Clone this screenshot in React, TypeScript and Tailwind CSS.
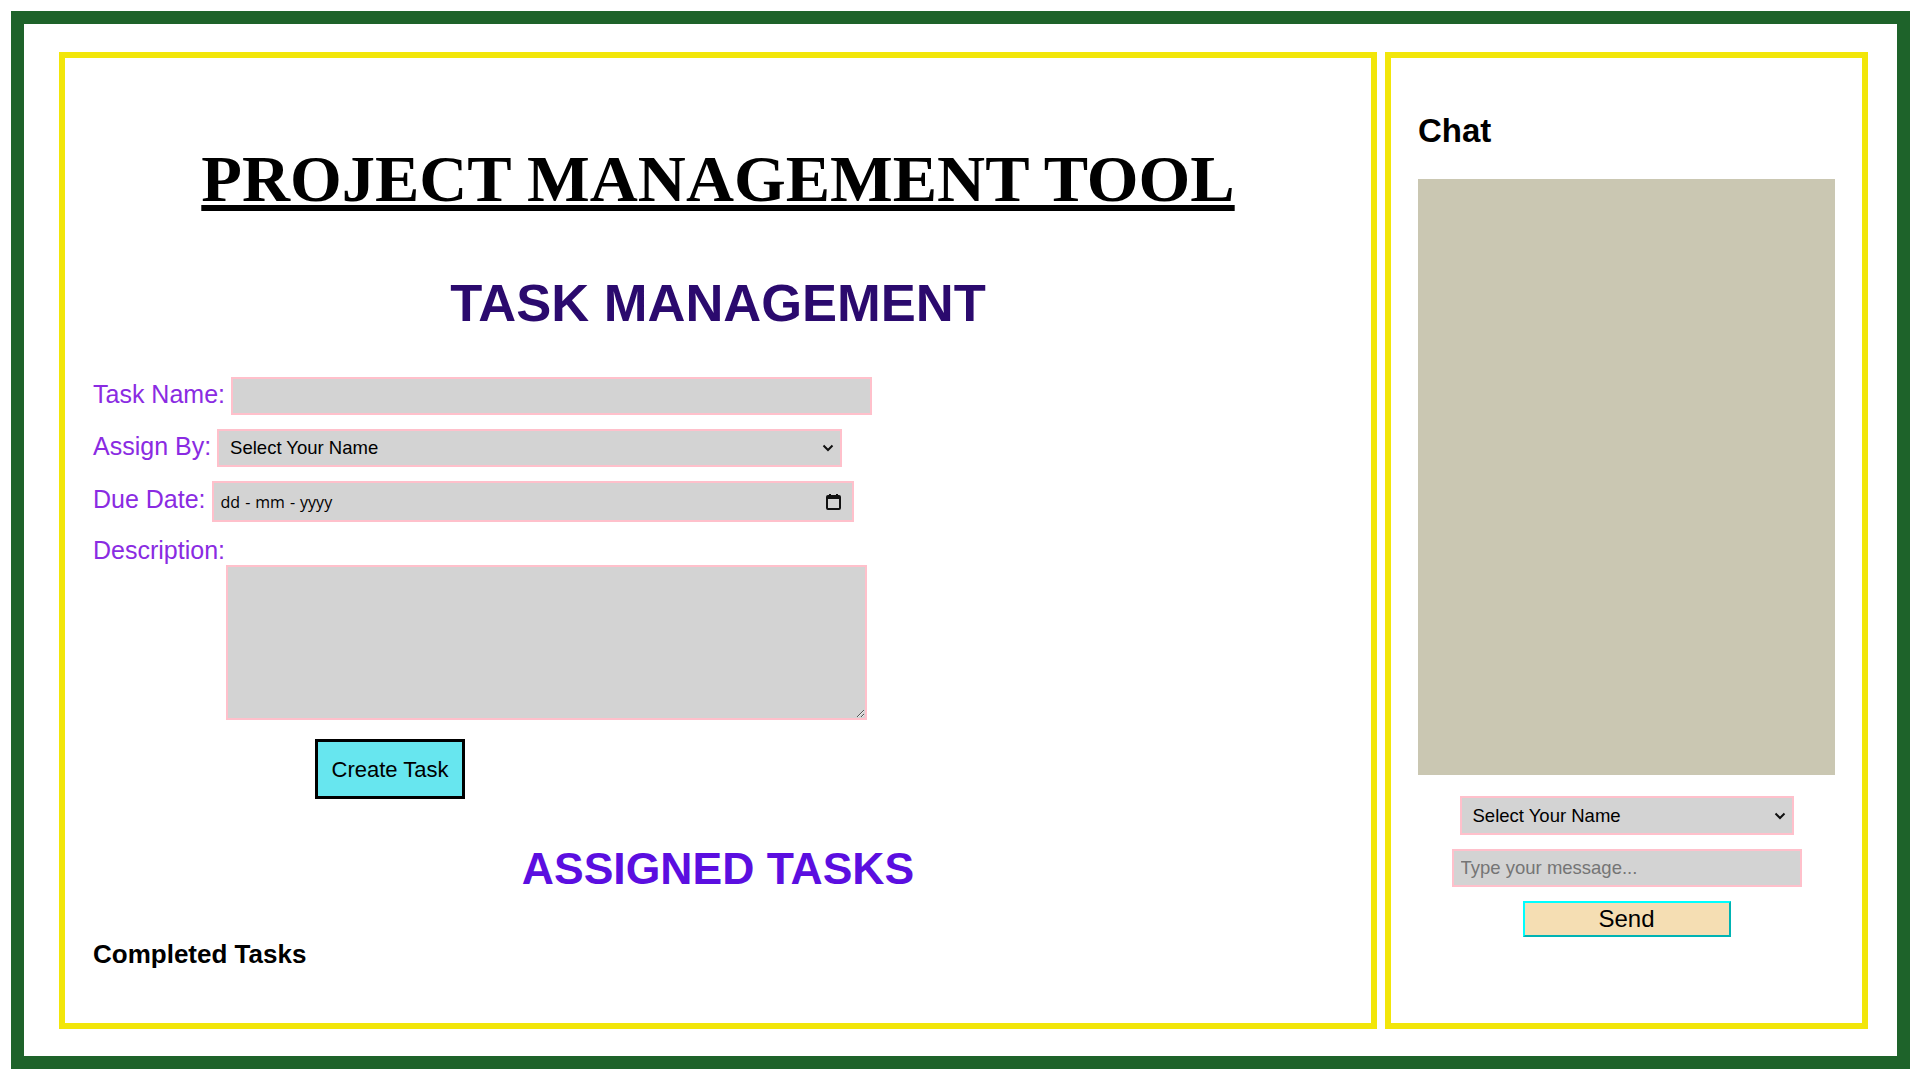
import { useState } from "react";

const NAMES = ["Select Your Name", "Alice", "Bob", "Charlie"];

function Chevron() {
  return (
    <svg width="12" height="8" viewBox="0 0 12 8" aria-hidden>
      <path d="M1.5 1.5 L6 6 L10.5 1.5" fill="none" stroke="#111" strokeWidth="2" />
    </svg>
  );
}

function CalendarIcon() {
  return (
    <svg width="15" height="17" viewBox="0 0 15 17" aria-hidden>
      <rect x="1" y="3" width="13" height="13" rx="1" fill="none" stroke="#111" strokeWidth="2" />
      <rect x="1" y="3" width="13" height="3" fill="#111" />
      <rect x="3" y="1" width="2" height="3" fill="#111" />
      <rect x="10" y="1" width="2" height="3" fill="#111" />
    </svg>
  );
}

function NameSelect({ width }: { width: string }) {
  const [name, setName] = useState(NAMES[0]);
  return (
    <div className={`relative h-full ${width}`}>
      <select
        value={name}
        onChange={(e) => setName(e.target.value)}
        className="w-full h-full appearance-none border-2 border-[#ffc0cb] bg-[#d3d3d3] pl-[11px] text-[18.5px] text-black outline-none"
      >
        {NAMES.map((n) => (
          <option key={n}>{n}</option>
        ))}
      </select>
      <span className="pointer-events-none absolute right-[8px] top-1/2 -translate-y-1/2 flex">
        <Chevron />
      </span>
    </div>
  );
}

export default function App() {
  return (
    <div className="bg-white p-[11px] font-['Liberation_Sans',Arial,sans-serif]">
      <div className="w-[1899px] h-[1058px] border-[13px] border-[#1e632a] pl-[35px] pt-[28px] flex gap-[8px]">
        {/* task panel */}
        <section className="w-[1318px] h-[977px] border-[6px] border-[#f2e60a] flex flex-col px-[28px]">
          <h1 className="mt-[88px] text-center font-['Liberation_Serif','Times_New_Roman',serif] font-bold text-[66.5px] leading-none text-black underline decoration-[6px] underline-offset-[4px]">
            PROJECT MANAGEMENT TOOL
          </h1>

          <h2 className="mt-[64px] text-center text-[52.5px] font-bold leading-none text-[#2b0a6e]">
            TASK MANAGEMENT
          </h2>

          <div className="mt-[48px] flex items-center h-[38px]">
            <label className="text-[25px] leading-[28px] pb-[5px] text-[#8a2be2]">Task Name:</label>
            <input
              type="text"
              className="ml-[6px] w-[641px] h-[38px] border-2 border-[#ffc0cb] bg-[#d3d3d3] px-2 text-[18px] outline-none"
            />
          </div>

          <div className="mt-[14px] flex items-center h-[38px]">
            <label className="text-[25px] leading-[28px] pb-[5px] text-[#8a2be2]">Assign By:</label>
            <div className="ml-[6px] h-[38px] flex">
              <NameSelect width="w-[625px]" />
            </div>
          </div>

          <div className="mt-[14px] flex items-center h-[41px]">
            <label className="text-[25px] leading-[28px] pb-[5px] text-[#8a2be2]">Due Date:</label>
            <div className="ml-[6px] w-[642px] h-[41px] border-2 border-[#ffc0cb] bg-[#d3d3d3] flex items-center pl-[7px] pr-[11px]">
              <span className="font-['Open_Sans',sans-serif] text-[16px] text-black flex gap-[5px]">
                <span>dd</span>
                <span>-</span>
                <span>mm</span>
                <span>-</span>
                <span>yyyy</span>
              </span>
              <span className="ml-auto flex">
                <CalendarIcon />
              </span>
            </div>
          </div>

          <label className="mt-[14px] text-[25px] leading-[28px] text-[#8a2be2]">Description:</label>
          <textarea className="ml-[133px] mt-[1px] w-[641px] h-[155px] border-2 border-[#ffc0cb] bg-[#d3d3d3] p-2 text-[18px] outline-none" />

          <button className="ml-[222px] mt-[19px] w-[150px] h-[60px] border-[3px] border-black bg-[#67e6ef] text-[22px] text-black">
            Create Task
          </button>

          <h2 className="mt-[48px] text-center text-[44.5px] font-bold leading-none text-[#5b0ee0]">
            ASSIGNED TASKS
          </h2>

          <h3 className="mt-[49px] text-[26px] font-bold leading-none text-black">Completed Tasks</h3>
        </section>

        {/* chat panel */}
        <aside className="w-[483px] h-[977px] border-[6px] border-[#f2e60a] flex flex-col items-center px-[27px]">
          <h2 className="mt-[56px] self-start text-[33px] font-bold leading-none text-black">Chat</h2>
          <div className="mt-[32px] w-[417px] h-[596px] bg-[#cac7b2]" />
          <div className="mt-[21px] h-[39px] flex">
            <NameSelect width="w-[334px]" />
          </div>
          <input
            type="text"
            placeholder="Type your message..."
            className="mt-[14px] w-[350px] h-[38px] border-2 border-[#ffc0cb] bg-[#d3d3d3] px-[7px] text-[18.5px] placeholder:text-[#757575] outline-none"
          />
          <button className="mt-[14px] w-[208px] h-[36px] border-2 border-t-[#00ffff] border-l-[#00ffff] border-r-[#00b3b3] border-b-[#00b3b3] bg-[#f5deb3] text-[24px] leading-none text-black">
            Send
          </button>
        </aside>
      </div>
    </div>
  );
}
